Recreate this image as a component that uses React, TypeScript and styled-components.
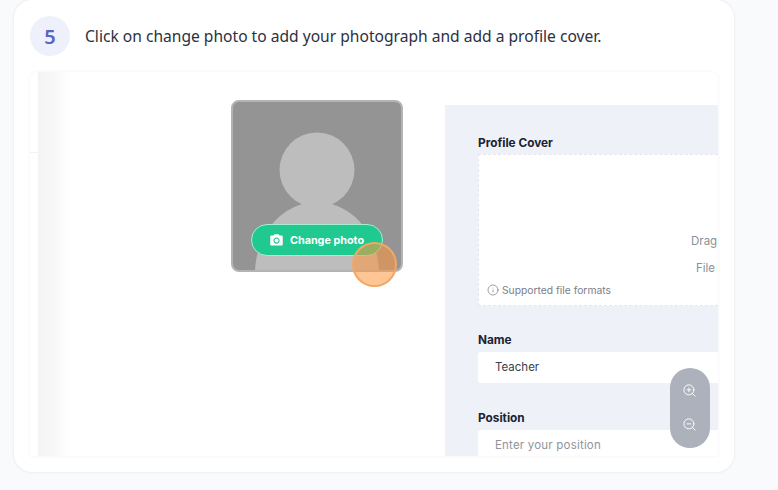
import React, { FC } from 'react';
import styled, { createGlobalStyle } from 'styled-components';
import { Info, ZoomIn, ZoomOut } from 'lucide-react';
import { MdPhotoCamera } from 'react-icons/md';

const GlobalStyle = createGlobalStyle`
  html, body {
    margin: 0;
    padding: 0;
    height: 490px;
    overflow: hidden;
    background: #f8fafc;
  }
  * {
    box-sizing: border-box;
  }
`;

const Page = styled.main`
  width: 778px;
  height: 490px;
  padding: 0 44px 18px 14px;
  font-family: 'Noto Sans', sans-serif;
`;

const StepCard = styled.section`
  height: 472px;
  padding: 16px;
  background: #fff;
  border-radius: 18px;
  box-shadow: 0 0 3px rgba(40, 50, 90, 0.11);
`;

const StepHeader = styled.header`
  display: flex;
  align-items: center;
  gap: 15px;
  height: 40px;
  margin-bottom: 16px;
`;

const StepBadge = styled.div`
  display: flex;
  align-items: center;
  justify-content: center;
  width: 40px;
  height: 40px;
  border-radius: 50%;
  background: #eef1fb;
  color: #5a64c4;
  font-size: 20px;
  font-weight: 600;
`;

const StepText = styled.p`
  margin: 0;
  color: #2b3040;
  font-size: 15.6px;
  font-weight: 400;
  white-space: nowrap;
`;

const Shot = styled.div`
  position: relative;
  display: flex;
  height: 384px;
  overflow: hidden;
  background: #fff;
  border-radius: 8px 8px 0 0;
  box-shadow: 0 0 3px rgba(40, 50, 90, 0.07);
  font-family: 'Inter', sans-serif;
`;

const LeftRail = styled.div`
  flex: 0 0 8px;
  background: linear-gradient(
    to bottom,
    #fff 80px,
    #f3f3f3 80px,
    #f3f3f3 81px,
    #fff 81px
  );
`;

const RailShade = styled.div`
  flex: 0 0 32px;
  background: linear-gradient(to right, #f3f3f3, #f8f8f8 50%, #fff);
`;

const AvatarColumn = styled.div`
  flex: 0 0 375px;
  padding: 28px 0 0 161px;
`;

const Avatar = styled.div`
  position: relative;
  width: 172px;
  height: 172px;
`;

const AvatarFrame = styled.div`
  width: 172px;
  height: 172px;
  overflow: hidden;
  background: #949494;
  border: 2px solid #b4b4b4;
  border-radius: 8px;

  svg {
    display: block;
  }
`;

const ChangePhoto = styled.button`
  position: absolute;
  left: 20px;
  top: 124px;
  display: flex;
  align-items: center;
  justify-content: center;
  gap: 6px;
  width: 132px;
  height: 32px;
  padding: 0 1px 0 0;
  background: #1fc98f;
  border: 1px solid #a5ecd2;
  border-radius: 16px;
  color: #fff;
  font-family: 'Inter', sans-serif;
  font-size: 10.8px;
  font-weight: 700;
`;

const ClickMarker = styled.div`
  position: absolute;
  left: 121px;
  top: 142px;
  width: 45px;
  height: 45px;
  background: rgba(255, 150, 60, 0.55);
  border: 2px solid #f2a765;
  border-radius: 50%;
`;

const FormPanel = styled.div`
  flex: 1;
  align-self: flex-start;
  height: 351px;
  margin-top: 33px;
  padding: 31px 0 0 33px;
  overflow: hidden;
  background: #eef1f7;
`;

const FieldLabel = styled.div`
  height: 14px;
  margin-bottom: 5px;
  color: #1a2233;
  font-size: 11.8px;
  font-weight: 700;
  line-height: 14px;
  white-space: nowrap;
`;

const DropZone = styled.div`
  width: 240px;
  height: 152px;
  margin: -1px 0 27px;
  padding-top: 79px;
  overflow: hidden;
  background: #fff;
  border: 1px dashed #e3e6ee;
  border-right: none;
  font-size: 11.5px;
  color: #8b9099;
`;

const DropLine = styled.div<{ indent: number }>`
  height: 14px;
  margin-bottom: 13px;
  padding-left: ${({ indent }) => indent}px;
  line-height: 14px;
  white-space: nowrap;
`;

const FormatsNote = styled.div`
  display: flex;
  align-items: center;
  gap: 3px;
  margin: -4px 0 0 8px;
  color: #7b8088;
  font-size: 10.3px;
`;

const TextField = styled.div<{ $placeholder?: boolean }>`
  display: flex;
  align-items: center;
  width: 240px;
  height: 31px;
  margin-bottom: 28px;
  padding: 0 0 2px 17px;
  background: #fff;
  border-radius: 3px 0 0 3px;
  color: ${({ $placeholder }) => ($placeholder ? '#8f949c' : '#3b414d')};
  font-size: 11.5px;
  letter-spacing: ${({ $placeholder }) => ($placeholder ? '0.2px' : '0')};
`;

const ZoomPill = styled.div`
  position: absolute;
  right: 8px;
  bottom: 8px;
  display: flex;
  flex-direction: column;
  align-items: center;
  justify-content: center;
  gap: 19px;
  width: 40px;
  height: 80px;
  padding: 0 2px 2px 0;
  background: #adb1bc;
  border-radius: 20px;
  color: #fff;
`;

const App: FC = () => (
  <Page>
    <GlobalStyle />
    <StepCard>
      <StepHeader>
        <StepBadge>5</StepBadge>
        <StepText>Click on change photo to add your photograph and add a profile cover.</StepText>
      </StepHeader>
      <Shot>
        <LeftRail />
        <RailShade />
        <AvatarColumn>
          <Avatar>
            <AvatarFrame>
              <svg width="168" height="168" viewBox="0 0 168 168">
                <circle cx="84" cy="68" r="37.5" fill="#bdbdbd" />
                <path d="M22 170 C23 130 51 100 84 100 C117 100 145 130 146 170 Z" fill="#bdbdbd" />
              </svg>
            </AvatarFrame>
            <ChangePhoto>
              <MdPhotoCamera size={15} />
              Change photo
            </ChangePhoto>
            <ClickMarker />
          </Avatar>
        </AvatarColumn>
        <FormPanel>
          <FieldLabel>Profile Cover</FieldLabel>
          <DropZone>
            <DropLine indent={212}>Drag</DropLine>
            <DropLine indent={217}>File</DropLine>
            <FormatsNote>
              <Info size={12} strokeWidth={1.5} />
              Supported file formats
            </FormatsNote>
          </DropZone>
          <FieldLabel>Name</FieldLabel>
          <TextField>Teacher</TextField>
          <FieldLabel>Position</FieldLabel>
          <TextField $placeholder>Enter your position</TextField>
        </FormPanel>
        <ZoomPill>
          <ZoomIn size={15} strokeWidth={1.5} />
          <ZoomOut size={15} strokeWidth={1.5} />
        </ZoomPill>
      </Shot>
    </StepCard>
  </Page>
);

export default App;
